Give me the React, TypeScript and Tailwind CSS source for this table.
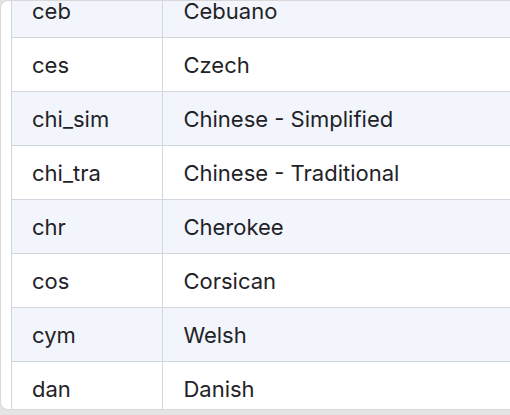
// Tabla de códigos de idioma (tesseract), recortada dentro de una card.
const languages: [string, string][] = [
  ["ceb", "Cebuano"],
  ["ces", "Czech"],
  ["chi_sim", "Chinese - Simplified"],
  ["chi_tra", "Chinese - Traditional"],
  ["chr", "Cherokee"],
  ["cos", "Corsican"],
  ["cym", "Welsh"],
  ["dan", "Danish"],
];

export default function App() {
  return (
    <div className="h-[415px] w-[510px] overflow-hidden bg-[#e4e4e4]">
      <div className="h-[410px] w-[540px] overflow-hidden rounded-l-lg border border-[#d9d9d9] bg-white pl-[10px]">
        <table
          className="-mt-[18px] border-collapse text-[22px] leading-[30px] text-[#1f2328]"
          style={{ fontFamily: "Inter, 'Noto Sans', sans-serif" }}
        >
          <tbody>
            {languages.map(([code, name], i) => (
              <tr
                key={code}
                className={i % 2 === 0 ? "bg-[#f2f5fb]" : "bg-white"}
              >
                <td className="h-[54px] w-[155px] border border-[#d0d7de] px-[20px] py-0">
                  {code}
                </td>
                <td className="h-[54px] w-[400px] border border-[#d0d7de] px-[20px] py-0">
                  {name}
                </td>
              </tr>
            ))}
          </tbody>
        </table>
      </div>
    </div>
  );
}
